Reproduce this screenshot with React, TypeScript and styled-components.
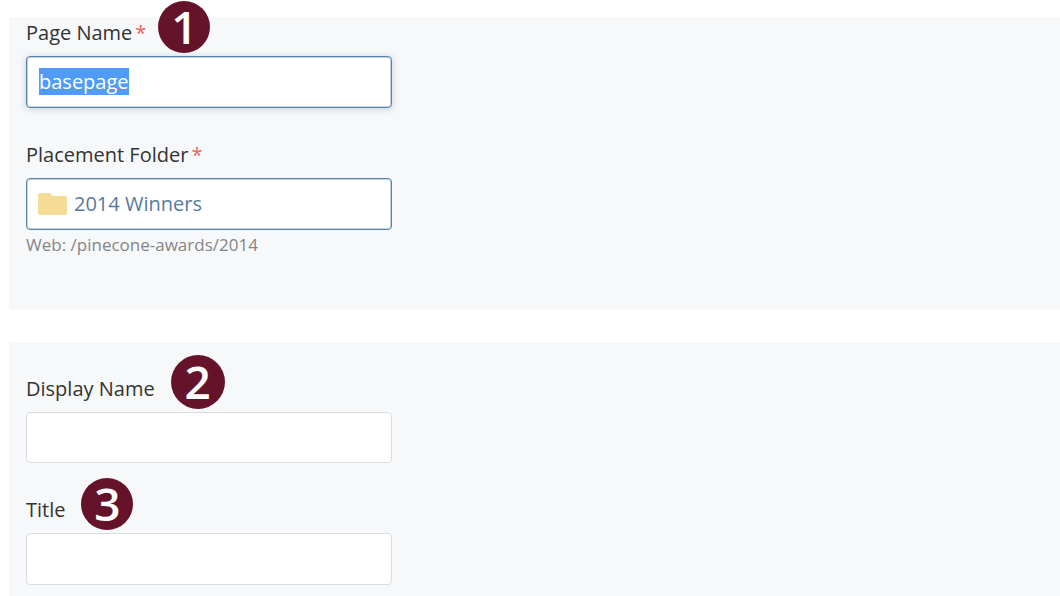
import { useEffect, useRef } from "react";
import styled, { createGlobalStyle } from "styled-components";

const GlobalStyle = createGlobalStyle`
  *, *::before, *::after { box-sizing: border-box; }
  body {
    margin: 0;
    background: #ffffff;
    color: #333333;
    font-family: "Open Sans", "Noto Sans", sans-serif;
    font-size: 20px;
    line-height: 26px;
  }
`;

const Form = styled.form`
  display: flex;
  flex-direction: column;
  gap: 33px;
  min-height: 100vh;
  padding: 17px 0 0 9px;
`;

const Panel = styled.section<{ $compact?: boolean; $grow?: boolean }>`
  display: flex;
  flex-direction: column;
  gap: 34px;
  flex: ${(p) => (p.$grow ? "1 0 auto" : "none")};
  padding: ${(p) => (p.$compact ? "3px 17px 53px" : "34px 17px 11px")};
  background: #f6f8fa;
`;

const Field = styled.div`
  display: flex;
  flex-direction: column;
  width: 100%;
  max-width: 366px;
`;

const LabelRow = styled.div`
  display: flex;
  margin-bottom: 10px;
`;

const Required = styled.span`
  margin-left: 3px;
  color: #e8635c;
`;

const BadgeAnchor = styled.span`
  position: relative;
`;

const Badge = styled.span<{ $size?: number; $gap?: number }>`
  position: absolute;
  bottom: -7px;
  left: ${(p) => p.$gap ?? 16}px;
  display: flex;
  align-items: center;
  justify-content: center;
  width: ${(p) => p.$size ?? 52}px;
  height: ${(p) => p.$size ?? 52}px;
  padding-bottom: 3px;
  border-radius: 50%;
  background: #64132b;
  color: #ffffff;
  font-size: 46px;
  font-weight: 600;
`;

const TextInput = styled.input<{ $tall?: boolean }>`
  width: 100%;
  height: ${(p) => (p.$tall ? 52 : 51)}px;
  padding: 0 12px 2px;
  border: 1px solid #d9dce1;
  border-radius: 4px;
  background: #ffffff;
  color: #333333;
  font: inherit;
  outline: none;

  &:focus {
    border-color: #5a81a8;
    box-shadow: inset 0 0 0 1px rgba(90, 129, 168, 0.35), 0 1px 7px rgba(96, 134, 171, 0.35);
  }
  &::selection {
    background: rgba(79, 155, 248, 0.996);
    color: #ffffff;
  }
`;

const FolderButton = styled.button`
  display: flex;
  align-items: center;
  gap: 7px;
  width: 100%;
  height: 52px;
  padding: 0 11px;
  border: 1px solid #5a81a8;
  border-radius: 4px;
  background: #ffffff;
  box-shadow: inset 0 0 0 1px rgba(90, 129, 168, 0.35);
  color: #567ba3;
  font: inherit;
  text-align: left;
`;

const Hint = styled.p`
  margin: 4px 0 0;
  color: #858585;
  font-size: 17px;
  line-height: 22px;
`;

function FolderIcon() {
  return (
    <svg width="29" height="22" viewBox="0 0 29 22" aria-hidden="true">
      <path d="M2 0H12L15 3H27Q29 3 29 5V20Q29 22 27 22H2Q0 22 0 20V2Q0 0 2 0Z" fill="#f5dc96" />
    </svg>
  );
}

export default function App() {
  const nameRef = useRef<HTMLInputElement>(null);

  useEffect(() => {
    nameRef.current?.focus();
    nameRef.current?.select();
  }, []);

  return (
    <>
      <GlobalStyle />
      <Form>
        <Panel $compact>
          <Field>
            <LabelRow>
              <label htmlFor="page-name">
                Page Name<Required>*</Required>
              </label>
              <BadgeAnchor>
                <Badge $gap={12}>1</Badge>
              </BadgeAnchor>
            </LabelRow>
            <TextInput ref={nameRef} id="page-name" type="text" defaultValue="basepage" spellCheck={false} required $tall />
          </Field>
          <Field>
            <LabelRow>
              <label htmlFor="placement-folder">
                Placement Folder<Required>*</Required>
              </label>
            </LabelRow>
            <FolderButton id="placement-folder" type="button">
              <FolderIcon />
              2014 Winners
            </FolderButton>
            <Hint>Web: /pinecone-awards/2014</Hint>
          </Field>
        </Panel>
        <Panel $grow>
          <Field>
            <LabelRow>
              <label htmlFor="display-name">Display Name</label>
              <BadgeAnchor>
                <Badge $size={54}>2</Badge>
              </BadgeAnchor>
            </LabelRow>
            <TextInput id="display-name" type="text" />
          </Field>
          <Field>
            <LabelRow>
              <label htmlFor="title">Title</label>
              <BadgeAnchor>
                <Badge>3</Badge>
              </BadgeAnchor>
            </LabelRow>
            <TextInput id="title" type="text" $tall />
          </Field>
        </Panel>
      </Form>
    </>
  );
}
